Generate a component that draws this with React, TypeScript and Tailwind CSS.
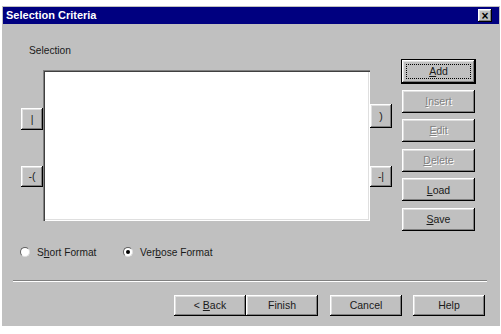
import type { ReactNode } from 'react';

const bevel =
  'bg-[#c0c0c0] shadow-[inset_-1px_-1px_#000,inset_1px_1px_#fff,inset_-2px_-2px_#808080,inset_2px_2px_#dfdfdf]';

function Btn({
  children,
  className = '',
  disabled = false,
  isDefault = false,
}: {
  children: ReactNode;
  className?: string;
  disabled?: boolean;
  isDefault?: boolean;
}) {
  return (
    <div
      className={`${bevel} relative flex items-center justify-center text-[10.5px] leading-none ${
        disabled ? 'text-[#808080] [text-shadow:1px_1px_0_#fff]' : 'text-[#1a1a1a]'
      } ${isDefault ? 'outline outline-1 outline-black' : ''} ${className}`}
    >
      {isDefault && <div className="absolute inset-[4px] border border-dotted border-black" />}
      <span className="relative">{children}</span>
    </div>
  );
}

function Radio({ label, checked }: { label: ReactNode; checked?: boolean }) {
  return (
    <div className="flex items-center gap-[7px]">
      <div className="w-[10px] h-[10px] rounded-full bg-white border border-t-[#606060] border-l-[#606060] border-b-[#dfdfdf] border-r-[#dfdfdf] flex items-center justify-center">
        {checked && <div className="w-[4px] h-[4px] rounded-full bg-black" />}
      </div>
      <span className="text-[10.2px] leading-[13px] text-[#1a1a1a]">{label}</span>
    </div>
  );
}

export default function App() {
  return (
    <div
      className="min-h-screen bg-white text-black"
      style={{ fontFamily: '"Liberation Sans", Arial, sans-serif' }}
    >
      <div className="ml-[2px] mt-[6px] w-[498px] h-[320px] bg-[#c0c0c0] flex flex-col">
        {/* title bar */}
        <div className="mx-[1px] mt-[1px] h-[17px] bg-[#000080] flex items-center justify-between pl-[3px] pr-[7px]">
          <span className="text-white font-bold text-[11px] leading-none">Selection Criteria</span>
          <div className={`${bevel} w-[14px] h-[13px] flex items-center justify-center text-[12px] leading-none font-bold`}>
            ×
          </div>
        </div>

        <div className="pl-[27px] mt-[20px] text-[10.2px] leading-[13px] text-[#1a1a1a]">Selection</div>

        {/* main row */}
        <div className="flex items-start mt-[3px] pl-[19px]">
          <div className="w-[22px] flex flex-col">
            <Btn className="mt-[48px] h-[22px]">|</Btn>
            <Btn className="mt-[36px] h-[21px]">-(</Btn>
          </div>
          <div className="w-[327px] h-[151px] mt-[10px] bg-white shadow-[inset_1px_1px_#808080,inset_2px_2px_#404040,inset_-1px_-1px_#fff,inset_-2px_-2px_#dfdfdf]" />
          <div className="w-[22px] flex flex-col">
            <Btn className="mt-[44px] h-[24px]">)</Btn>
            <Btn className="mt-[38px] h-[21px]">-|</Btn>
          </div>
          <div className="ml-[10px] w-[73px] flex flex-col gap-[6.6px]">
            <Btn isDefault className="h-[23px]">
              <u>A</u>dd
            </Btn>
            <Btn disabled className="h-[23px]">
              <u>I</u>nsert
            </Btn>
            <Btn disabled className="h-[23px]">
              <u>E</u>dit
            </Btn>
            <Btn disabled className="h-[23px]">
              <u>D</u>elete
            </Btn>
            <Btn className="h-[23px]">
              <u>L</u>oad
            </Btn>
            <Btn className="h-[23px]">
              <u>S</u>ave
            </Btn>
          </div>
        </div>

        {/* radios */}
        <div className="flex items-center mt-[15px] pl-[18px]">
          <div className="w-[103px]">
            <Radio label={<>S<u>h</u>ort Format</>} />
          </div>
          <Radio checked label={<>Ver<u>b</u>ose Format</>} />
        </div>

        {/* separator */}
        <div className="ml-[11px] w-[474px] mt-[21px] border-t border-t-[#808080] border-b border-b-white" />

        {/* bottom buttons */}
        <div className="flex mt-[13px] pl-[172px]">
          <Btn className="w-[72px] h-[21px]">
            &lt; <u>B</u>ack
          </Btn>
          <Btn className="w-[72px] h-[21px]">Finish</Btn>
          <Btn className="ml-[12px] w-[72px] h-[21px]">Cancel</Btn>
          <Btn className="ml-[11px] w-[72px] h-[21px]">Help</Btn>
        </div>
      </div>
    </div>
  );
}
